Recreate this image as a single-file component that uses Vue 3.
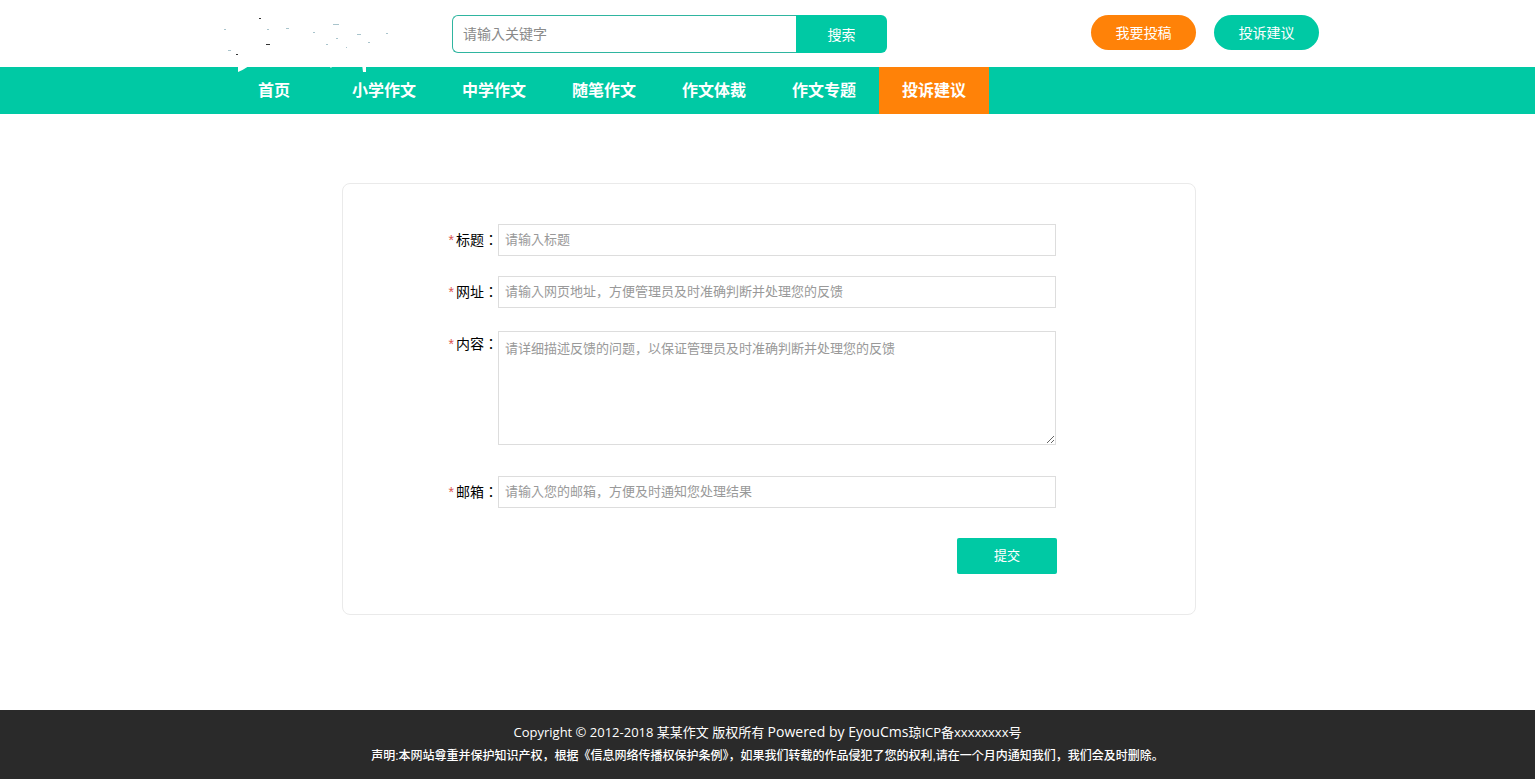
<script setup>
const navs = ['首页', '小学作文', '中学作文', '随笔作文', '作文体裁', '作文专题', '投诉建议']
</script>

<template>
  <div class="page">
    <header class="top">
      <div class="wrap top-in">
        <div class="logo">
          <svg width="170" height="66" viewBox="0 0 170 66">
            <path d="M19 55 L38 50 L30 58 Q24 62 19 64 Z M110 58 L117 54 L112 60 Z M143 56 L147 56 L147 64 L144 64 Z" fill="#fff" />
            <g fill="#333">
              <rect x="40" y="10" width="2" height="1" />
              <rect x="47" y="36" width="4" height="1" />
              <rect x="17" y="46" width="2" height="1" />
            </g>
            <g fill="#a9c4cc">
              <rect x="5" y="21" width="2" height="1" />
              <rect x="48" y="21" width="2" height="1" />
              <rect x="67" y="20" width="3" height="1" />
              <rect x="114" y="16" width="6" height="1" />
              <rect x="94" y="24" width="2" height="1" />
              <rect x="117" y="30" width="2" height="1" />
              <rect x="138" y="26" width="4" height="1" />
              <rect x="149" y="34" width="2" height="1" />
              <rect x="167" y="25" width="2" height="1" />
              <rect x="107" y="36" width="2" height="1" />
              <rect x="127" y="39" width="1" height="1" />
              <rect x="9" y="42" width="3" height="1" />
            </g>
          </svg>
        </div>
        <div class="search">
          <input type="text" placeholder="请输入关键字" />
          <button>搜索</button>
        </div>
        <div class="top-btns">
          <a class="pill orange">我要投稿</a>
          <a class="pill green">投诉建议</a>
        </div>
      </div>
    </header>

    <nav class="nav">
      <div class="wrap nav-in">
        <a v-for="(n, i) in navs" :key="n" class="nav-item" :class="{ active: i === navs.length - 1 }">{{ n }}</a>
      </div>
    </nav>

    <main class="main">
      <div class="card">
        <div class="row">
          <label><i>*</i>标题：</label>
          <input class="input" type="text" placeholder="请输入标题" />
        </div>
        <div class="row">
          <label><i>*</i>网址：</label>
          <input class="input" type="text" placeholder="请输入网页地址，方便管理员及时准确判断并处理您的反馈" />
        </div>
        <div class="row row-area">
          <label><i>*</i>内容：</label>
          <textarea class="input area" placeholder="请详细描述反馈的问题，以保证管理员及时准确判断并处理您的反馈"></textarea>
        </div>
        <div class="row">
          <label><i>*</i>邮箱：</label>
          <input class="input" type="text" placeholder="请输入您的邮箱，方便及时通知您处理结果" />
        </div>
        <div class="submit-row">
          <button class="submit">提交</button>
        </div>
      </div>
    </main>

    <footer class="foot">
      <p class="l1">Copyright © 2012-2018 某某作文 版权所有 <span>Powered by EyouCms</span>琼ICP备xxxxxxxx号</p>
      <p class="l2">声明:本网站尊重并保护知识产权，根据《信息网络传播权保护条例》，如果我们转载的作品侵犯了您的权利,请在一个月内通知我们，我们会及时删除。</p>
    </footer>
  </div>
</template>

<style>
html, body { margin: 0; background: #fff; }
</style>

<style scoped>
.page { font-family: "Liberation Sans", "Noto Sans CJK KR", sans-serif; height: 779px; display: flex; flex-direction: column; overflow: hidden; }
.wrap { width: 1100px; margin-left: 219px; }

/* 顶部 */
.top { height: 67px; position: relative; z-index: 2; }
.top-in { display: flex; position: relative; height: 67px; }
.logo { position: absolute; left: 0; top: 8px; line-height: 0; }
.search { display: flex; margin: 15px 0 0 233px; width: 435px; height: 38px; }
.search input { flex: 1; min-width: 0; box-sizing: border-box; height: 38px; border: 1px solid #2fb5a0; border-right: 0; border-radius: 6px 0 0 6px; padding: 0 10px; font: 14px "Liberation Sans", "Noto Sans CJK KR", sans-serif; outline: none; }
.search input::placeholder { color: #8a8a8a; }
.search button { width: 91px; height: 38px; border: none; background: #00c9a4; color: #fff; border-radius: 0 6px 6px 0; font: 14px "Liberation Sans", "Noto Sans CJK KR", sans-serif; }
.top-btns { margin: 15px 0 0 auto; display: flex; gap: 18px; }
.pill { width: 105px; height: 35px; line-height: 36px; border-radius: 18px; text-align: center; color: #fff; font-size: 14px; }
.orange { background: #ff8208; }
.green { background: #00c9a4; }

/* 导航 */
.nav { height: 47px; background: #00c9a4; }
.nav-in { display: flex; }
.nav-item { width: 110px; height: 47px; line-height: 47px; text-align: center; color: #fff; font-size: 16px; font-weight: 700; }
.nav-item.active { background: #ff8208; }

/* 表单 */
.main { flex: 1; padding-top: 69px; }
.card { box-sizing: border-box; width: 854px; height: 432px; margin-left: 342px; padding-top: 40px; border: 1px solid #eaeaea; border-radius: 8px; }
.row { display: flex; margin-bottom: 20px; }
.row label { width: 155px; box-sizing: border-box; line-height: 32px; text-align: right; font-size: 14px; color: #000; }
.row label i { color: #d9534f; font-style: normal; margin-right: 2px; }
.input { box-sizing: border-box; width: 558px; height: 32px; border: 1px solid #ddd; padding: 0 6px 2px; font: 13px "Liberation Sans", "Noto Sans CJK KR", sans-serif; outline: none; background: #fff; }
.input::placeholder { color: #999; }
.row-area { margin: 23px 0 31px; }
.row-area label { line-height: 26px; }
.area { height: 114px; padding: 6px; display: block; resize: vertical; }
.submit-row { display: flex; padding: 10px 0 0 614px; }
.submit { width: 100px; height: 36px; padding: 0 0 3px; border: none; border-radius: 2px; background: #00c9a4; color: #fff; font: 13px "Liberation Sans", "Noto Sans CJK KR", sans-serif; }

/* 底部 */
.foot { height: 69px; background: #2a2a2a; color: #fff; text-align: center; box-sizing: border-box; padding-top: 11px; }
.foot p { margin: 0; }
.l1 { font-family: "Open Sans", "Noto Sans CJK KR", sans-serif; font-size: 13px; line-height: 22px; }
.l1 span { font-size: 14px; }
.l2 { font-size: 12px; line-height: 26px; font-weight: 500; }
</style>
